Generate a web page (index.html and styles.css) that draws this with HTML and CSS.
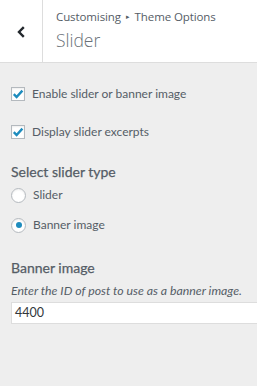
FILE: index.html
```html
<!DOCTYPE html>
<html>
<head>
<meta charset="utf-8">
<link rel="stylesheet" href="styles.css">
</head>
<body>
<div class="header">
  <div class="back">
    <svg width="10" height="12" viewBox="0 0 10 12"><path d="M7.8 1.2 L3 6 L7.8 10.8" fill="none" stroke="#23282d" stroke-width="2.4"/></svg>
  </div>
  <div class="titles">
    <div class="crumb">Customising <span class="tri">▸</span> Theme Options</div>
    <div class="title">Slider</div>
  </div>
</div>
<div class="controls">
  <label class="check-row first">
    <span class="cbox"><svg width="12" height="12" viewBox="0 0 12 12"><path d="M1.8 6.2 L4.6 9 L10.4 2.6" fill="none" stroke="#1e8cbe" stroke-width="2.4"/></svg></span>
    <span class="lbl">Enable slider or banner image</span>
  </label>
  <label class="check-row second">
    <span class="cbox"><svg width="12" height="12" viewBox="0 0 12 12"><path d="M1.8 6.2 L4.6 9 L10.4 2.6" fill="none" stroke="#1e8cbe" stroke-width="2.4"/></svg></span>
    <span class="lbl">Display slider excerpts</span>
  </label>
  <div class="group-title">Select slider type</div>
  <label class="radio-row r1">
    <span class="rbox"></span>
    <span class="lbl">Slider</span>
  </label>
  <label class="radio-row r2">
    <span class="rbox on"><span class="dot"></span></span>
    <span class="lbl">Banner image</span>
  </label>
  <div class="group-title banner">Banner image</div>
  <div class="desc">Enter the ID of post to use as a banner image.</div>
  <div class="input">4400</div>
</div>
</body>
</html>
```
FILE: styles.css
```css
* { box-sizing: border-box; }
html, body { margin: 0; padding: 0; }
body {
  background: #eeeeee;
  font-family: "Open Sans", "Noto Sans", sans-serif;
  color: #555d66;
  width: 257px;
  height: 386px;
  overflow: hidden;
}
.header {
  display: flex;
  height: 63px;
  background: #fff;
  border-bottom: 1px solid #dddddd;
}
.back {
  width: 43px;
  border-right: 1px solid #dddddd;
  display: flex;
  align-items: center;
  justify-content: center;
  padding-top: 1px;
}
.titles {
  padding: 9px 0 0 13px;
}
.crumb {
  font-size: 11.5px;
  line-height: 16px;
  color: #555d66;
  letter-spacing: -0.1px;
}
.tri { font-size: 7px; vertical-align: 2px; margin: 0 2px; }
.title {
  font-family: "Open Sans", sans-serif;
  font-size: 17.5px;
  font-weight: 300;
  line-height: 26px;
  margin-top: 2px;
  color: #6a7178;
}
.controls {
  padding: 0 11px;
  display: flex;
  flex-direction: column;
  font-family: Lato, "Open Sans", sans-serif;
}
.check-row, .radio-row {
  display: flex;
  align-items: center;
  gap: 7px;
  font-size: 12px;
  line-height: 16px;
}
.check-row.first { margin-top: 23px; }
.check-row.second { margin-top: 22px; }
.cbox {
  width: 14px;
  height: 14px;
  border: 1px solid #b4b9be;
  background: #fff;
  box-shadow: inset 0 1px 2px rgba(0,0,0,0.07);
  display: flex;
  align-items: center;
  justify-content: center;
}
.group-title {
  font-size: 14px;
  font-weight: 400;
  -webkit-text-stroke: 0.25px #555d66;
  line-height: 18px;
  margin-top: 23px;
}
.radio-row.r1 { margin-top: 6px; }
.radio-row.r2 { margin-top: 14px; }
.rbox {
  width: 15px;
  height: 15px;
  border-radius: 50%;
  border: 1px solid #b4b9be;
  background: #fff;
  box-shadow: inset 0 1px 2px rgba(0,0,0,0.07);
  display: flex;
  align-items: center;
  justify-content: center;
}
.dot {
  width: 6px;
  height: 6px;
  border-radius: 50%;
  background: #1e8cbe;
}
.group-title.banner { margin-top: 26px; }
.desc {
  font-size: 12.3px;
  font-style: italic;
  line-height: 16px;
  margin-top: 6px;
}
.input {
  margin-top: 3px;
  margin-right: -20px;
  height: 22px;
  background: #fff;
  border: 1px solid #dddddd;
  font-size: 12.5px;
  line-height: 20px;
  padding-left: 3px;
  color: #32373c;
}
```
